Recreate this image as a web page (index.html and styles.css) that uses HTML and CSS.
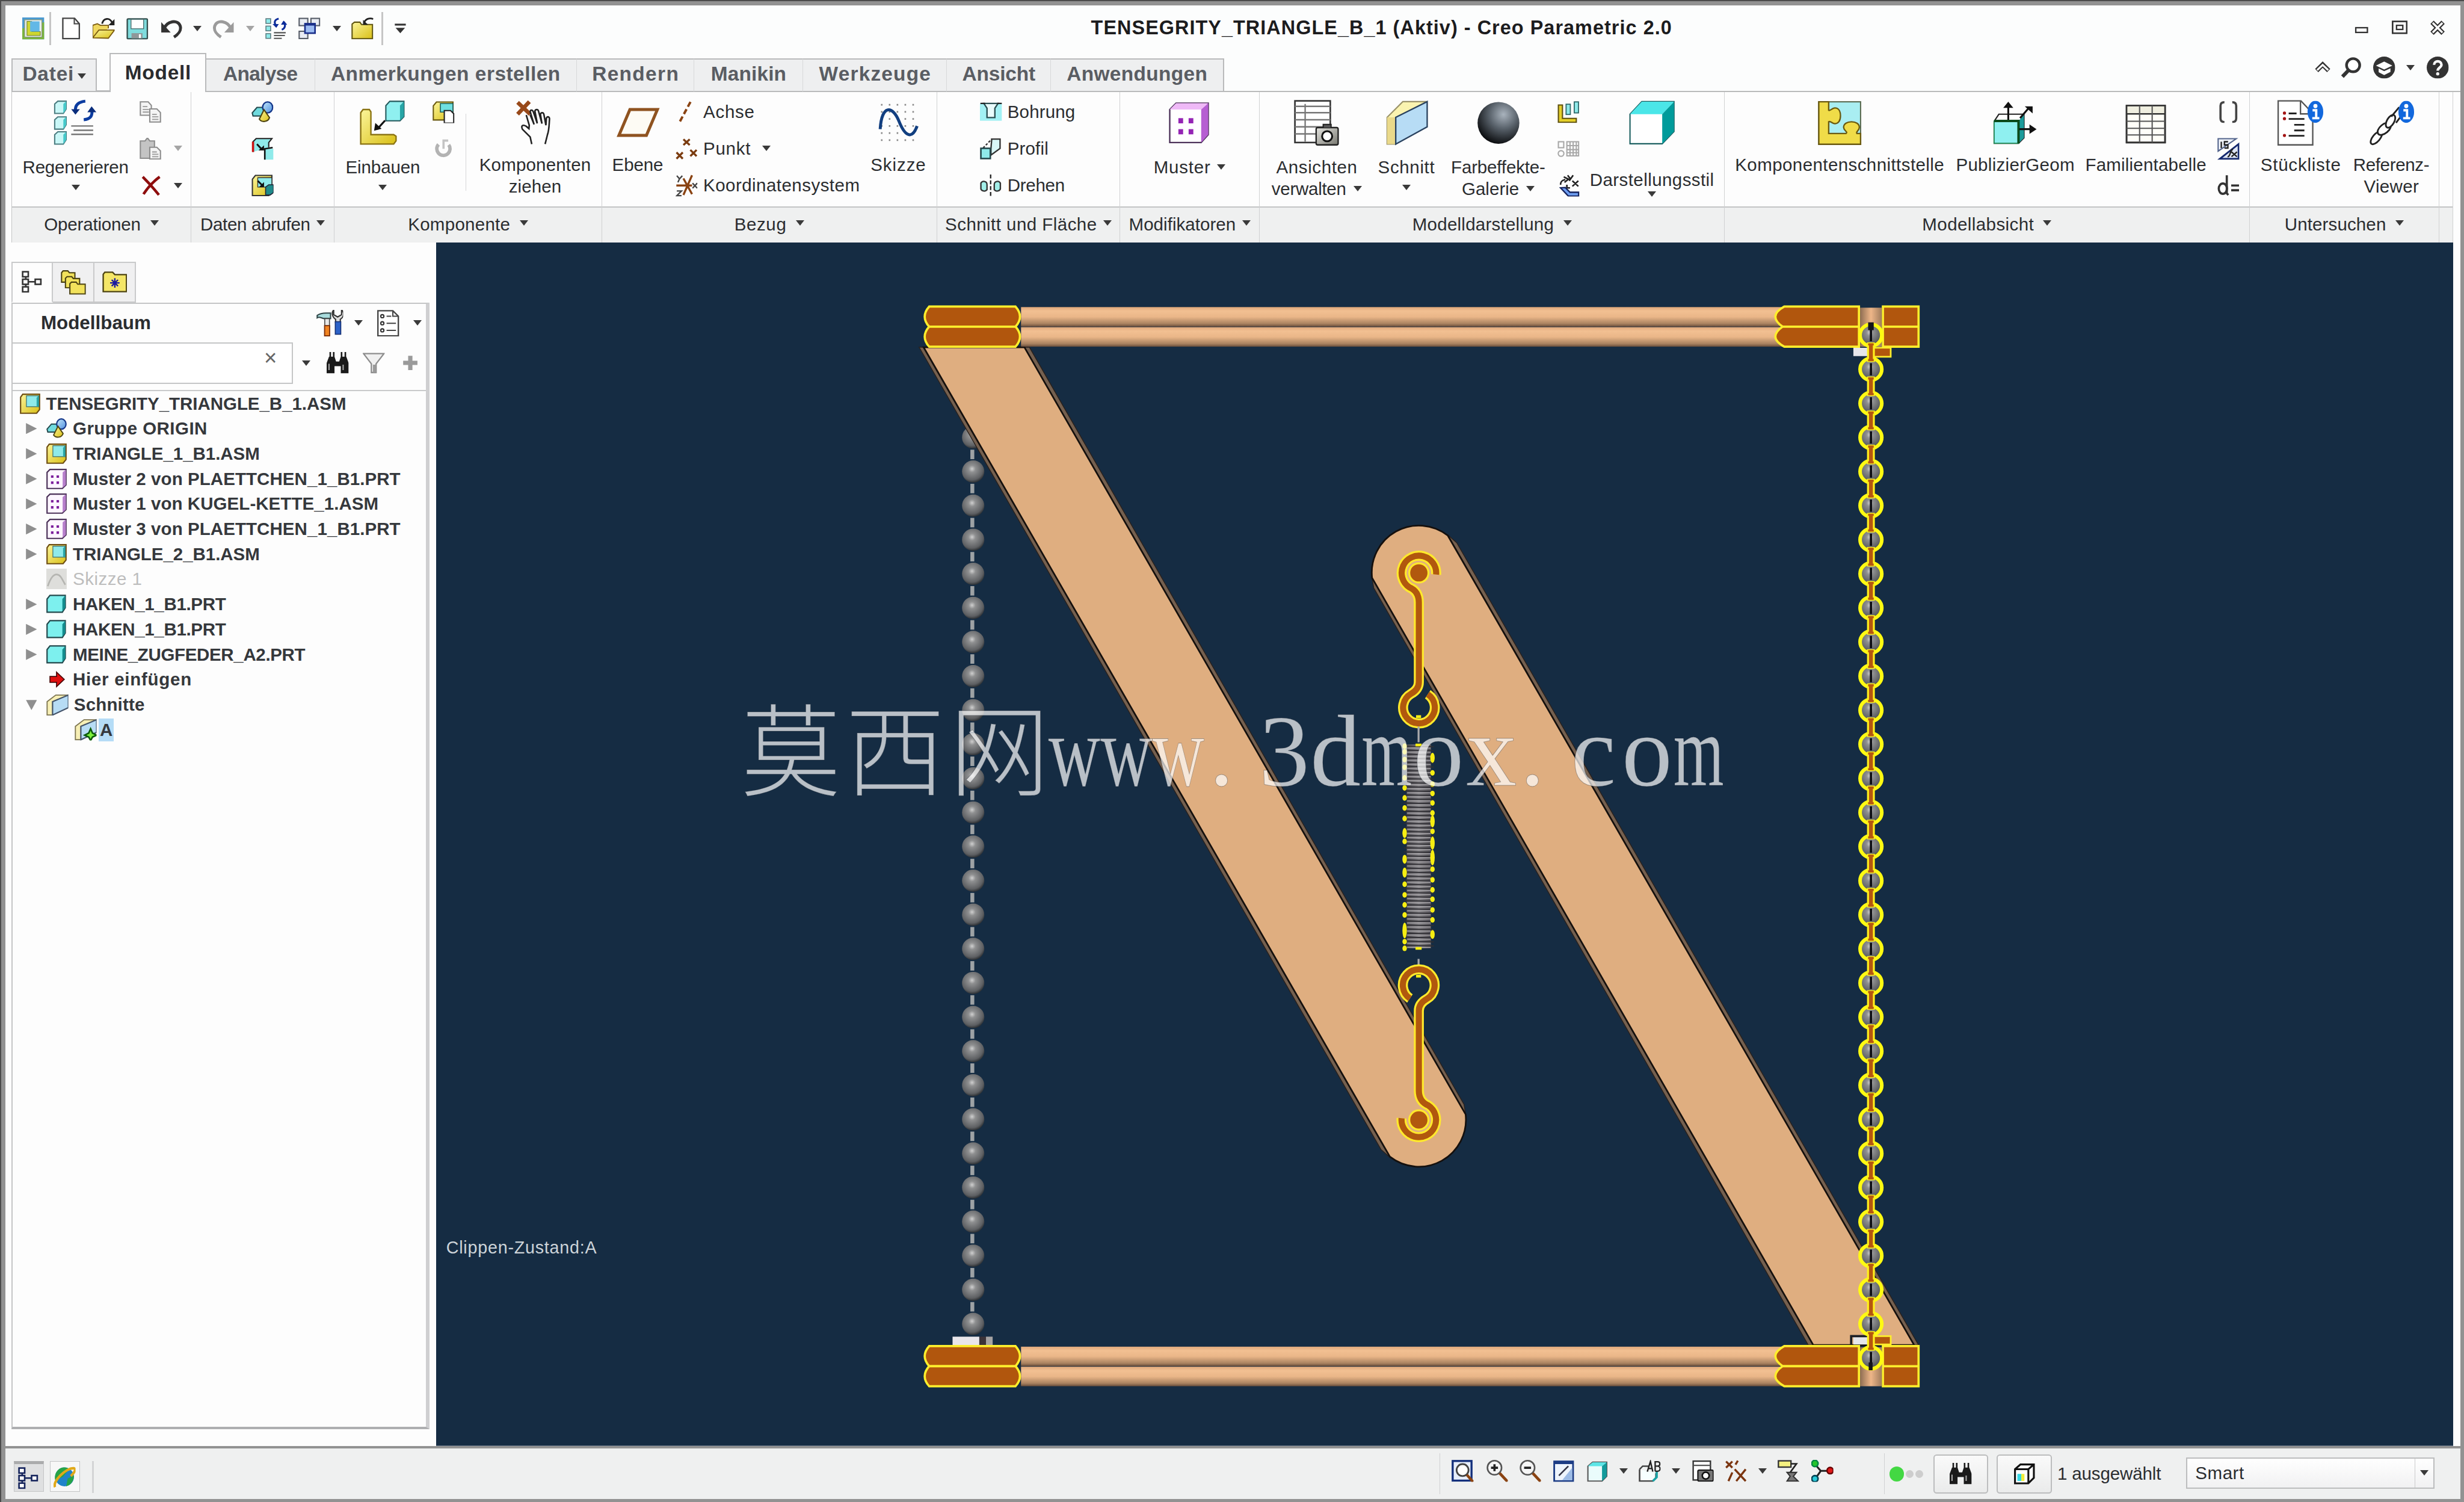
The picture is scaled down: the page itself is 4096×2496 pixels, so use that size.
FILE: index.html
```html
<!DOCTYPE html>
<html lang="de">
<head>
  <meta charset="UTF-8" />
  <title>TENSEGRITY_TRIANGLE_B_1 (Aktiv) - Creo Parametric 2.0</title>
  <link rel="stylesheet" href="styles.css">
</head>
<body>

  <!-- Icon sprite -->
  <svg class="sprite" aria-hidden="true">
    <defs>
      <linearGradient id="gYellow" x1="0" y1="0" x2="1" y2="1"><stop offset="0" stop-color="#fbf59a"/><stop offset="1" stop-color="#d9bf16"/></linearGradient>
      <linearGradient id="gBlue" x1="0" y1="0" x2="1" y2="1"><stop offset="0" stop-color="#c4e9fb"/><stop offset="1" stop-color="#4f8fe0"/></linearGradient>
      <linearGradient id="gGrey" x1="0" y1="0" x2="1" y2="1"><stop offset="0" stop-color="#e6e6e2"/><stop offset="1" stop-color="#77776f"/></linearGradient>
      <radialGradient id="gSphere" cx=".62" cy=".3" r=".75"><stop offset="0" stop-color="#a9b3bd"/><stop offset=".45" stop-color="#59626b"/><stop offset="1" stop-color="#050608"/></radialGradient>
    </defs>

    <symbol id="i-creo" viewBox="0 0 14 14">
      <rect width="14" height="14" fill="#4b9ad0"/><path d="M0 14V7L14 3v11z" fill="#79b33b"/>
      <rect x="1.500" y="1.500" width="11" height="11" fill="#e9eff0" stroke="#8b9a7a" stroke-width=".5"/>
      <path d="M3 2.500v9h8.500V9H6V2.500z" fill="#cfd630" stroke="#6b7a1c" stroke-width=".4"/><rect x="5" y="2.500" width="6" height="6.500" fill="#63b8e6"/>
    </symbol>
    <symbol id="i-new" viewBox="0 0 14 14"><path d="M1.700.5h7.500l3 3.500v9.500H1.700z" fill="#fff" stroke="#444" stroke-width=".9"/><path d="M9 .5V4h3.200" fill="none" stroke="#444" stroke-width=".8"/></symbol>
    <symbol id="i-open" viewBox="0 0 14 14"><path d="M0 13V5l3-1 2 1h5v2" fill="#efd75f" stroke="#7a5a10" stroke-width=".7"/><path d="M0 13l4-5h10l-4 5.200z" fill="url(#gYellow)" stroke="#7a5a10" stroke-width=".7"/><path d="M6 4c1-4 5-4 6.500-.5" fill="none" stroke="#222" stroke-width="1.100"/><path d="M14 1v4h-4z" fill="#222"/></symbol>
    <symbol id="i-save" viewBox="0 0 14 14"><rect x=".6" y=".9" width="12.800" height="12.700" rx=".6" fill="#7fdcdd" stroke="#35504f" stroke-width=".9"/><rect x="3" y="1.200" width="8" height="6" fill="#fff" stroke="#46696a" stroke-width=".5"/><rect x="3.300" y="10" width="7" height="3.300" fill="#8f9799"/><rect x="8" y="10.700" width="1.300" height="2.400" fill="#fff"/></symbol>
    <symbol id="i-undo" viewBox="0 0 14 14"><path d="M2 7.500C4 2 11 1 12.500 5.500c.8 3-1 5-4 7" fill="none" stroke="currentColor" stroke-width="1.900"/><path d="M.4 3v6.600h6z" fill="currentColor"/></symbol>
    <symbol id="i-regen" viewBox="0 0 14 14"><g fill="#8feaea" stroke="#5a7c80" stroke-width=".6"><rect x=".4" y=".8" width="3" height="3"/><rect x=".4" y="5.500" width="3" height="3"/><rect x=".4" y="10.300" width="3" height="3"/></g><path d="M5.500 9.700h7.500M5.500 11.500h7M5.500 13.300h5" stroke="#555" stroke-width=".8"/><path d="M8.500.8C5.800 1.500 5.600 3 6.500 4.800M10.500 7.800c2.500-1 2.500-3.600 1.200-5" fill="none" stroke="#0c2c9a" stroke-width="1.200"/><path d="M4.600 4.200h4L7 6.600zM10 4.600h4L11.600 2z" fill="#0c2c9a"/></symbol>
    <symbol id="i-windows" viewBox="0 0 14 14"><g fill="#e8ecf3" stroke="#555b66" stroke-width=".8"><rect x=".5" y=".6" width="5.500" height="4.600"/><rect x="8" y=".6" width="5.500" height="4.600"/><rect x=".5" y="8.800" width="5.500" height="4.600"/></g><rect x="4.200" y="4" width="6.400" height="6" fill="#9dbcf2" stroke="#1a2f8a"/><path d="M4 4.400h6.800" stroke="#1a2f8a" stroke-width="1.600"/></symbol>
    <symbol id="i-closefolder" viewBox="0 0 14 14"><path d="M.5 13.500V4.200L2 3h3.500l1 1.500h7v9z" fill="url(#gYellow)" stroke="#5e5410" stroke-width=".8"/><path d="M8 3.500C9 1 11.500 0 14 1" fill="none" stroke="#222" stroke-width="1.100"/><path d="M7.500 1.500v3.200h3.200z" fill="#222"/></symbol>
    <symbol id="i-customize" viewBox="0 0 8 8"><path d="M.5 1.500h7" stroke="#333" stroke-width="1.200"/><path d="M1 3.500h6L4 7z" fill="#333"/></symbol>

    <symbol id="i-min" viewBox="0 0 10 10"><rect x=".8" y="5" width="7.400" height="3" fill="#fff" stroke="#333" stroke-width=".9"/></symbol>
    <symbol id="i-max" viewBox="0 0 10 10"><rect x=".5" y="1" width="9" height="7.500" fill="#fff" stroke="#333" stroke-width="1"/><rect x="3" y="3.500" width="4" height="2.600" fill="#fff" stroke="#333" stroke-width=".9"/></symbol>
    <symbol id="i-close" viewBox="0 0 10 10"><path d="M1.500 1.500l7 7M8.500 1.500l-7 7" stroke="#333" stroke-width="3"/><path d="M1.900 1.900l6.200 6.200M8.100 1.900L1.900 8.100" stroke="#fff" stroke-width="1.300"/></symbol>
    <symbol id="i-collapse" viewBox="0 0 10 8"><path d="M1.200 6L5 2.200 8.800 6" fill="none" stroke="#333" stroke-width="2.900"/><path d="M1.500 5.700L5 2.400l3.500 3.300" fill="none" stroke="#fff" stroke-width="1.200"/></symbol>
    <symbol id="i-search" viewBox="0 0 14 14"><circle cx="8.300" cy="5.500" r="4.200" fill="#fff" stroke="#333" stroke-width="1.700"/><path d="M5.300 8.800L1.500 12.800" stroke="#333" stroke-width="2.300"/></symbol>
    <symbol id="i-learn" viewBox="0 0 14 14"><circle cx="7" cy="7" r="7" fill="#333"/><path d="M1.800 5.700L7 3.200l5.200 2.500L7 8.200z" fill="#fff"/><path d="M3.500 7.600L7 9.300l4-1.800v2.300L7 11.800 3.500 10z" fill="#fff"/></symbol>
    <symbol id="i-help" viewBox="0 0 14 14"><circle cx="7" cy="7" r="7" fill="#333"/><path d="M4.700 5.300C4.700 2.300 9.400 2.300 9.400 5.200 9.400 7 7 7 7 9" fill="none" stroke="#fff" stroke-width="1.600"/><circle cx="7" cy="11" r="1" fill="#fff"/></symbol>

    <symbol id="i-copy" viewBox="0 0 14 14"><g fill="#f4f4f4" stroke="#8d8d8d" stroke-width=".8"><path d="M.5.5h5l2 2.200V9h-7z"/><path d="M6.500 5h4.500l2.300 2.300v6H6.500z"/></g><path d="M2 3.500h3M2 5.300h4M2 7h4M8 8.500h3M8 10h4M8 11.600h4" stroke="#999" stroke-width=".7"/></symbol>
    <symbol id="i-paste" viewBox="0 0 14 14"><path d="M.5 2h3l1.500-2 1.500 2h3v11h-9z" fill="#c4c4c4" stroke="#8d8d8d" stroke-width=".8"/><path d="M6.500 6h4.500l2.300 2.300v5.200H6.500z" fill="#f4f4f4" stroke="#8d8d8d" stroke-width=".8"/><path d="M8 9h3M8 10.500h4M8 12h4" stroke="#999" stroke-width=".7"/></symbol>
    <symbol id="i-delete" viewBox="0 0 14 14"><path d="M2 1.500c3 3 6 6 10.300 11.500M12.800 1.500C8 5 5 8.500 2.500 12.500" fill="none" stroke="#8e0d0d" stroke-width="1.700"/></symbol>

    <symbol id="i-udf" viewBox="0 0 14 14"><path d="M.5 7.500l3-3.500h5l-1.500 5.500H1z" fill="#6fdadd" stroke="#24484c" stroke-width=".8"/><ellipse cx="10.300" cy="4" rx="3.200" ry="3.500" fill="url(#gBlue)" stroke="#16388a" stroke-width=".9"/><path d="M8 5.500l3.500 5c-1 3-5 3.200-6.500 1z" fill="url(#gYellow)" stroke="#4e4410" stroke-width=".8"/></symbol>
    <symbol id="i-copygeom" viewBox="0 0 14 14"><path d="M1 9V2.500L3 .5h10L11 3v3" fill="#8feaea" stroke="#222" stroke-width=".8"/><path d="M1 2.500V9" stroke="#c11" stroke-width="1.400"/><path d="M8 7h6v7H8z" fill="#8feaea"/><path d="M13.500 6.200L8.500 7v7" fill="none" stroke="#111" stroke-width="1"/><path d="M3.500 4l3 3.300" stroke="#111" stroke-width="1.100"/><path d="M8 8H4.500L8 4.800z" fill="#111"/></symbol>
    <symbol id="i-shrink" viewBox="0 0 14 14"><path d="M.6 13.400V3L2.500.6H13V12l-2 1.400z" fill="url(#gYellow)" stroke="#333" stroke-width=".8"/><path d="M4 2h9v6H4z" fill="#8feaea" stroke="#333" stroke-width=".5"/><path d="M9 8l2-1.500h3v5L12 13H9z" fill="#1f8a8a" stroke="#223" stroke-width=".6"/><path d="M4 4l3 3" stroke="#111" stroke-width="1.100"/><path d="M8 8H4.800L8 4.800z" fill="#111"/></symbol>
    <symbol id="i-create" viewBox="0 0 14 14"><path d="M.5 12V3L2.500.6H13V9L11 12z" fill="url(#gYellow)" stroke="#6b5a10" stroke-width=".8"/><path d="M5 1.500h8V7H5z" fill="#6fe0e0" stroke="#1b5c5c" stroke-width=".6"/><path d="M7.500 6h4l2 2v6h-6z" fill="#fff" stroke="#222" stroke-width=".8"/></symbol>
    <symbol id="i-repeat" viewBox="0 0 14 14"><path d="M10.300 4.500a4.200 4.200 0 1 1-6.500-.3" fill="none" stroke="#b3b3b3" stroke-width="2.200"/><path d="M7 7V1.800h3" fill="none" stroke="#c4c4c4" stroke-width="1.400"/></symbol>
    <symbol id="i-axis" viewBox="0 0 14 14"><path d="M9.500.5L2.500 13.500" stroke="#8a4312" stroke-width="1.500" stroke-dasharray="3.500 1.800"/></symbol>
    <symbol id="i-point" viewBox="0 0 14 14"><path d="M5 1l4 3.600M9 1L5 4.600M.6 9.300l4 4M4.600 9.300l-4 4M9.400 7.700l4 4M13.400 7.700l-4 4" stroke="#7b3c10" stroke-width="1.300"/></symbol>
    <symbol id="i-csys" viewBox="0 0 14 14"><path d="M.5 7h10M10.500.5L5 13M5 2.500l5.500 10" stroke="#8a4312" stroke-width="1.300"/><path d="M.8.800l1.700 2L4.300.8M2.500 2.800L1.500 5M10.800 5.500l3 3.200M13.800 5.500l-3 3.200M.8 10.500h3l-3 3h3" fill="none" stroke="#444" stroke-width=".9"/></symbol>
    <symbol id="i-hole" viewBox="0 0 14 14"><rect y="1.500" width="14" height="11" fill="#a2f1f4"/><path d="M2.500 1.500h9l-2 3v6h-5v-6z" fill="#e9fbfb" stroke="#2b4f52" stroke-width=".9"/><path d="M.3 1.500h3M11 1.500h3" stroke="#222" stroke-width=".9"/></symbol>
    <symbol id="i-extrude" viewBox="0 0 14 14"><path d="M7.500.8h5.300v6L7 11V7z" fill="#d9f7f7" stroke="#333" stroke-width=".9"/><path d="M2 6.500L7.500.8" stroke="#333" stroke-dasharray="1.500 1" stroke-width=".9"/><rect x=".6" y="6.700" width="6" height="6.500" fill="#8feaea" stroke="#24484c" stroke-width="1"/></symbol>
    <symbol id="i-revolve" viewBox="0 0 14 14"><path d="M6.800 0v14" stroke="#222" stroke-dasharray="2.500 1.200" stroke-width=".9"/><path d="M.6 5.500C1.500 3.800 4.500 4 4.500 6.500v3.200C3 11.500.6 10 .6 9z" fill="#a2efe9" stroke="#333" stroke-width=".9"/><path d="M13 5.500c-.9-1.700-3.900-1.500-3.900 1v3.200c1.500 1.800 3.900.3 3.900-.7z" fill="#a2efe9" stroke="#333" stroke-width=".9"/></symbol>
    <symbol id="i-explode" viewBox="0 0 14 14"><path d="M.6 2.500h2.600V11H12v2.500H.6z" fill="#e4cf2a" stroke="#5e5010" stroke-width=".8"/><rect x="5.500" y="2" width="2.700" height="6.500" fill="#8feaea" stroke="#2f6a6c" stroke-width=".7"/><rect x="10.700" y=".5" width="2.700" height="7" fill="#8feaea" stroke="#2f6a6c" stroke-width=".7"/></symbol>
    <symbol id="i-toggle" viewBox="0 0 14 14"><g fill="none" stroke="#a8a8a8" stroke-width=".8"><rect x=".6" y="2.500" width="3.400" height="3.800"/><circle cx="2.300" cy="10" r="1.800"/><path d="M6 2.500h7.500v9H6zM8 2.500v9M10 2.500v9M12 2.500v9M6 5h7.500M6 7.500h7.500M6 9.500h7.500"/></g></symbol>
    <symbol id="i-drag3d" viewBox="0 0 14 14"><path d="M2 6.500C2 3.500 4 3.500 5 3.200M4 1.500l3 1.500-2.500 2M6.500.5L8 2.500M10 .5L7.500 4M9.500 4l3.800 3.500M13.300 4L9.500 7.500M6 6.500v2h2" fill="none" stroke="#222" stroke-width="1"/><path d="M2 8.500l3-.2 3 3h5.500v2.500H7z" fill="#6d9df0" stroke="#14225c" stroke-width=".9"/></symbol>
    <symbol id="i-brackets" viewBox="0 0 14 14"><path d="M4.500.7Q2 .7 2 3v8q0 2.300 2.500 2.300M9.500.7Q12 .7 12 3v8q0 2.300-2.500 2.300" fill="none" stroke="#444" stroke-width="1.400"/></symbol>
    <symbol id="i-switch" viewBox="0 0 14 14"><path d="M.5 8.500V.6H12z" fill="#f1f4fa" stroke="#53648c" stroke-width=".8"/><path d="M1.500 13.400h12V4z" fill="#dfe6f6" stroke="#14286e" stroke-width="1.100"/><path d="M2.500 2.500v4M4.500 6.500h2.200V4.500H4.500v-2h2.300M6.500 12c2 .3 1.500-5 3.500-4.500M9 9l3.500 3M12.500 9L9 12" fill="none" stroke="#222" stroke-width=".9"/></symbol>
    <symbol id="i-dim" viewBox="0 0 14 14"><ellipse cx="3.500" cy="9" rx="2.600" ry="3.300" fill="none" stroke="#333" stroke-width="1.400"/><path d="M6 .5V12l1 1M8.800 7h5M8.800 10h5" fill="none" stroke="#333" stroke-width="1.400"/></symbol>

    <symbol id="b-regen" viewBox="0 0 30 30"><g fill="#c9f7f7" stroke="#4b7c80" stroke-width=".8"><path d="M1.500 3l2-1.800h5.300v5L7 9H1.500zM1.500 13l2-1.800h5.300v5L7 19H1.500zM1.500 22.500l2-1.800h5.300v5l-1.800 2.800H1.500z"/></g><g fill="#46c9ca"><path d="M7 3l1.800-1.800v5L7 9zM7 13l1.800-1.800v5L7 19zM7 22.500l1.800-1.800v5L7 28.500z"/></g><path d="M12 17h14M13.500 19.700H26M12 22.300h14" stroke="#777" stroke-width=".9"/><path d="M21 1.200c-5 .5-6.500 3-6.300 6M20 13c5-.5 5.500-3 5.200-6.500" fill="none" stroke="#0c3ca0" stroke-width="1.900"/><path d="M12 6.300h5.500l-2.800 3.500zM22.300 8.200H28L25 4.500z" fill="#0a2d7c"/></symbol>
    <symbol id="b-assemble" viewBox="0 0 30 30"><path d="M1 28.500V8.500L2.500 6.500H6.500l1 1.500v14.500H22l1.500 1v3L22 28.500z" fill="url(#gYellow)" stroke="#8a7312" stroke-width=".9"/><path d="M17 4l2.500-2.700H28.500V11l-2.500 2.700H17z" fill="#8ff0f0" stroke="#25595c" stroke-width=".8"/><path d="M26 13.500V4l2.500-2.700V11z" fill="#27a5a6"/><path d="M16.500 13.500L11.500 19" stroke="#111" stroke-width="1.200"/><path d="M9.500 20l.8-5 4 3.800z" fill="#111"/></symbol>
    <symbol id="b-drag" viewBox="0 0 30 30"><path d="M4 2l8 7.500M11.500 1.500L4 9.500" stroke="#98491a" stroke-width="2.500"/><path d="M13 28.500L12 24l-5-5c-1-2.500.5-3 2.500-1.800l1.700 1.500.2-2.200L9.500 10M12 10l2.500 6-2.500-8c0-1.500 1.500-1.500 2 0l2.500 7.300L15 7.500c.3-1.300 2-1.300 2.300 0l2.200 8-1-6c.5-1.300 1.800-1.300 2.200 0l1.300 7 .3-4.500c.7-1.500 2-.8 2 .5-.3 4-.2 7-1.300 10l-1.500 6" fill="none" stroke="#222" stroke-width="1"/></symbol>
    <symbol id="b-plane" viewBox="0 0 30 30"><path d="M10 6.500h17.500l-7 16.500H3z" fill="#fdfbf4" stroke="#8f5320" stroke-width="1.900"/></symbol>
    <symbol id="b-sketch" viewBox="0 0 30 30"><path d="M4 3.500h24M4 8h24M4 12.500h24M4 17h24M4 21.500h24M4 26h24" stroke="#8a8a8a" stroke-width="1" stroke-dasharray="1 4"/><path d="M3.500 19C4.500 3 11.500 4 15.500 14s8.500 11.500 11.500 3" fill="none" stroke="#123f80" stroke-width="1.900"/></symbol>
    <symbol id="b-pattern" viewBox="0 0 30 30"><path d="M2.500 6.500l4-4H27v20l-4.500 5H2.500z" fill="#fff" stroke="#4b3158" stroke-width=".9"/><path d="M2.500 6.500l4-4H27l-4.500 4z" fill="#efb9f7"/><path d="M22.500 27.500v-21L27 2.500v20z" fill="#b65fd2"/><g fill="#9424b4"><rect x="8" y="12" width="3" height="3.300"/><rect x="14.500" y="12" width="3" height="3.300"/><rect x="8" y="19" width="3" height="3.300"/><rect x="14.500" y="19" width="3" height="3.300"/></g></symbol>
    <symbol id="b-views" viewBox="0 0 30 30"><rect x="1" y="1" width="22.500" height="26.500" fill="#fff" stroke="#333"/><path d="M1 4.500h22.500M1 8.500h22.500M1 13h22.500M1 17.500h22.500M1 22h22.500M7.500 3v24" stroke="#777" stroke-width=".9"/><rect x="14.500" y="18" width="14" height="11" rx="1" fill="url(#gGrey)" stroke="#222" stroke-width=".9"/><path d="M19 18v-2h5v2" fill="#555" stroke="#222" stroke-width=".8"/><circle cx="21.500" cy="23.500" r="3.200" fill="#fff" stroke="#111" stroke-width="1.200"/></symbol>
    <symbol id="b-section" viewBox="0 0 30 30"><path d="M3 11.500L13 1.500h15.500L8.500 11.500 8.500 28.500H3z" fill="#faf3b0" stroke="#9b936a" stroke-width=".8"/><path d="M3 11.500h5.500v17H3z" fill="#ead98a"/><path d="M8.500 11.500l20-10v16l-20 11z" fill="#b7dcf5" stroke="#2b4360" stroke-width=".9"/></symbol>
    <symbol id="b-sphere" viewBox="0 0 30 30"><circle cx="15.300" cy="15" r="13.300" fill="url(#gSphere)"/></symbol>
    <symbol id="b-shade" viewBox="0 0 30 30"><path d="M1 9.500l7.500-8h20.500v19l-7.500 7.800H1z" fill="#fff" stroke="#1b5f60" stroke-width=".8"/><path d="M1 9.500l7.500-8h20.500l-7.500 8z" fill="#4be6e8"/><path d="M21.500 28.300V9.500l7.500-8v19z" fill="#009b9b"/></symbol>
    <symbol id="b-puzzle" viewBox="0 0 30 30"><rect x="1.700" y="1.600" width="26.600" height="27" fill="#a9eef2" stroke="#5a6a50" stroke-width=".8"/><path d="M1.700 1.600H8V7c1.200.6 2-1.500 4-1.500 2.200 0 3.500 2 3.500 5s-1.300 5-3.500 5c-2 0-2.800-2-4-1.200v7.500h11c1.500-1.200-1.500-1.800-1.500-4 0-2.300 2.300-3.500 5-3.500s5 1.200 5 3.500c0 2.200-2.500 2.800-1.500 4h2.300v6.800H1.700z" fill="#f0dc48" stroke="#6b5a10" stroke-width=".9"/></symbol>
    <symbol id="b-publish" viewBox="0 0 30 30"><path d="M1.500 14l3-4.500h16v15l-3.500 3.500H1.500z" fill="#fff" stroke="#222" stroke-width=".8"/><path d="M17 14l3.500-4.500v15L17 28z" fill="#1b9b9b"/><rect x="1.500" y="14" width="15.500" height="14" fill="#8ff0f0" stroke="#285" stroke-width=".7"/><path d="M1.500 13.800h15.500V28" fill="none" stroke="#0b4a1a" stroke-width="1.500"/><path d="M10.500 13V4M18 12l6-7M17.500 19h7" stroke="#111" stroke-width="1.200"/><path d="M7.300 5.500h6.400L10.500 1.500zM21 4.500h5V9zM24 16v6l4.500-3z" fill="#111"/></symbol>
    <symbol id="b-table" viewBox="0 0 30 30"><rect x="2.700" y="4" width="24.500" height="23.500" fill="#fffef8" stroke="#333"/><rect x="2.700" y="4" width="24.500" height="5.300" fill="#f0efe0"/><path d="M2.700 4h24.500v23.500H2.700zM2.700 9.300h24.500" fill="none" stroke="#333"/><path d="M2.700 14h24.500M2.700 18.500h24.500M2.700 22.700h24.500M11 4v23.500M19 4v23.500" stroke="#555" stroke-width=".8"/></symbol>
    <symbol id="b-bom" viewBox="0 0 30 30"><path d="M.8 1h14.500l7.500 8v20H.8z" fill="#fff" stroke="#555" stroke-width=".9"/><path d="M15 1v8.300h7" fill="none" stroke="#555" stroke-width=".9"/><path d="M7.500 9h5M7.500 12.500h10M11 16.200h6.500M11 19.800h6.500M7.500 23.200h10" stroke="#222" stroke-width="1.100"/><g fill="#a31515"><circle cx="4.800" cy="8.800" r="1"/><circle cx="4.800" cy="12.300" r="1"/><circle cx="4.800" cy="23" r="1"/></g><use href="#badge-info" x="19.500" y="1"/></symbol>
    <symbol id="b-ref" viewBox="0 0 30 30"><g fill="#fff" stroke="#222" stroke-width="1.100"><ellipse cx="5.500" cy="24.500" rx="2.300" ry="5" transform="rotate(40 5.500 24.500)"/><ellipse cx="10.500" cy="18.800" rx="2.800" ry="5" transform="rotate(50 10.500 18.800)"/><ellipse cx="14.500" cy="14" rx="2.300" ry="4.500" transform="rotate(30 14.500 14)"/><path d="M15 11l5-6M18 15l3-4"/></g><use href="#badge-info" x="19.500" y="1"/></symbol>
    <symbol id="badge-info" viewBox="0 0 10 14" width="10" height="14"><ellipse cx="5" cy="7" rx="5" ry="7" fill="#1268dd"/><circle cx="5" cy="3.300" r="1.300" fill="#fff"/><path d="M3.200 6H5.500v5M3 11h4.500" fill="none" stroke="#fff" stroke-width="1.500"/></symbol>

    <symbol id="i-tree" viewBox="0 0 14 14"><g fill="#fff" stroke="currentColor" stroke-width="1"><path d="M3 3v8M5 7h4" /><rect x="1" y=".6" width="3.600" height="3.200"/><rect x="1" y="5.400" width="3.600" height="3.200"/><rect x="1" y="10.200" width="3.600" height="3.200"/><rect x="9" y="5.400" width="3.600" height="3.200"/></g></symbol>
    <symbol id="i-folders" viewBox="0 0 16 16"><g fill="#f2e25c" stroke="#4c4312" stroke-width=".8"><path d="M.5 8V2L1.500.8h3L5.500 2H9v6z"/><path d="M3 11.500v-6l1-1h3l1 1.200h4v6z"/><path d="M5.800 15.500V9l1-1h3l1 1.300h4.800v6.200z"/></g></symbol>
    <symbol id="i-favfolder" viewBox="0 0 16 16"><path d="M.6 14V3l1-1.300h5L8 3.200h7.400V14z" fill="#f4e667" stroke="#4c4312" stroke-width=".9"/><path d="M8 5.500v6M5 8.500h6M6 6.500l4 4M10 6.500l-4 4" stroke="#1a1aa0" stroke-width=".9"/></symbol>
    <symbol id="i-tools" viewBox="0 0 17 17"><path d="M.5 5V3.500C2 2.500 4 2 6 2h3v3.500H5C3.500 5.500 2 4 .5 5z" fill="#a8dbdc" stroke="#2f4446" stroke-width=".8"/><path d="M5.300 5.500h3V11h-3z" fill="#e8e8e8" stroke="#444" stroke-width=".6"/><rect x="5.200" y="10" width="3.200" height="6.500" fill="#f08422" stroke="#7c2f08" stroke-width=".7"/><path d="M11 0v3l2.500 1.500L16 3V0c2 1.500 1.500 4.500-.8 6V8h-3V6C10 4.500 9.500 1.500 11 0z" fill="#ddd" stroke="#333" stroke-width=".8"/><rect x="12" y="7.500" width="3.500" height="8" fill="#2d63c8" stroke="#142f73" stroke-width=".6"/></symbol>
    <symbol id="i-list" viewBox="0 0 14 17"><path d="M.5.5H10L13.500 4v12.500H.5z" fill="#fff" stroke="#444" stroke-width=".9"/><path d="M10 .5V4h3.500M6 4h3M6 8.500h6M6 13h6" stroke="#444" stroke-width=".8" fill="none"/><g fill="none" stroke="#333" stroke-width=".8"><circle cx="3.300" cy="4" r="1"/><circle cx="3.300" cy="8.500" r="1"/><circle cx="3.300" cy="13" r="1"/></g></symbol>
    <symbol id="i-find" viewBox="0 0 14 14"><path d="M1.800 0h1v3h-1zM4 0h1v3H4zM9 0h1v3H9zM11.400 0h1v3h-1zM0 12.500V7l1.500-4H5l1 3h2l1-3h3.500L14 7v6.500H9V9H5v4.500H0z" fill="#1a1a1a"/><path d="M1.500 7.500v4M10.500 8v3.500" stroke="#aaa" stroke-width=".8"/></symbol>
    <symbol id="i-funnel" viewBox="0 0 14 14"><path d="M.5 1h13L8.500 7.500V13h-3V7.500z" fill="#f0f0f0" stroke="#8d8d8d" stroke-width=".9"/><path d="M6.500 8h2v5h-2z" fill="#999"/></symbol>
    <symbol id="i-plus" viewBox="0 0 11 11"><path d="M4 .5h3V4h3.500v3H7v3.500H4V7H.5V4H4z" fill="#9a9a9a"/></symbol>

    <symbol id="t-asm" viewBox="0 0 14 14"><path d="M.5 13.500v-11L2 .5h11.500V11l-2 2.500z" fill="url(#gYellow)" stroke="#6e4e12" stroke-width=".9"/><path d="M4.500 1.500h8.500v7.500H4.500z" fill="#8feaea" stroke="#3d6d6d" stroke-width=".5"/><path d="M11.500 9V3L13 1v8z" fill="#2aa6a8"/></symbol>
    <symbol id="t-pat" viewBox="0 0 14 14"><path d="M.5 13.500V2.500L2.500.5h11V11l-2.500 2.500z" fill="#fdf6ff" stroke="#4b3158" stroke-width=".9"/><path d="M11.200 13V2.500L13.400.6V11z" fill="#b77fcc"/><path d="M3.200 4.500h1.700v1.700H3.200zM7 4.500h1.700v1.700H7zM3.200 8.700h1.700v1.700H3.200zM7 8.700h1.700v1.700H7z" fill="#7c1f9c"/></symbol>
    <symbol id="t-prt" viewBox="0 0 14 14"><path d="M.5 12.500V3.500L2.500 1h10.500v8.500l-2 3z" fill="#7df0ee" stroke="#24484c" stroke-width=".9"/><path d="M11 12V3.500L13 1v8.500z" fill="#138d8f"/></symbol>
    <symbol id="t-sketch" viewBox="0 0 14 14"><rect width="14" height="14" fill="#dededb"/><path d="M1 12c1-3 3-8 6-8s4 4 6 7" fill="none" stroke="#b5b5b1" stroke-width="1.100"/></symbol>
    <symbol id="t-insert" viewBox="0 0 14 14"><path d="M2.500 5H7V2l5.300 5L7 12V9H2.500z" fill="#e01010" stroke="#4a0808" stroke-width=".7"/></symbol>
    <symbol id="t-sec" viewBox="0 0 14 14"><path d="M.5 5L6 .8h8L4 5v8.500H.5z" fill="#f7efb5" stroke="#7d7550" stroke-width=".7"/><path d="M4 5l10-4.200v8L4 13.500z" fill="#b7dcf5" stroke="#44546a" stroke-width=".8"/></symbol>
    <symbol id="t-seca" viewBox="0 0 14 14"><use href="#t-sec"/><path d="M10.200 6.500l1.200 2.800 2.600 1.300-2.600 1.200-1.200 2.200-1.200-2.200-2.600-1.200 2.600-1.300z" fill="#7df23c" stroke="#0b5a0b" stroke-width="1"/></symbol>

    <symbol id="s-globe" viewBox="0 0 14 14"><circle cx="7" cy="7" r="6" fill="#1f83c9"/><path d="M3 2.500C5 0 9 1 10 2L6 7 1 9C.5 6 1.500 4 3 2.500zM9 8l4-2c0 3-1.500 6-5 7z" fill="#26a348"/><path d="M1 13.500C-1 10 8 1 13 1.500c2 1-1 4-2 5" fill="none" stroke="#e0a91a" stroke-width="1.600"/></symbol>
    <symbol id="s-refit" viewBox="0 0 14 14"><rect x=".7" y=".7" width="12" height="12.500" fill="#e7eefb" stroke="#14307c" stroke-width="1.300"/><circle cx="7" cy="6.500" r="3.800" fill="#fff" stroke="#444" stroke-width="1.100"/><path d="M9.700 9.500l4 4.500" stroke="#8a4312" stroke-width="1.700"/></symbol>
    <symbol id="s-zin" viewBox="0 0 14 14"><circle cx="5.500" cy="5" r="4.500" fill="#f5f5f5" stroke="#555"/><path d="M3.300 5h4.400M5.500 2.800v4.400" stroke="#222" stroke-width="1.400"/><path d="M8.800 8.500l5 5.300" stroke="#8a4312" stroke-width="1.800"/></symbol>
    <symbol id="s-zout" viewBox="0 0 14 14"><circle cx="5.500" cy="5" r="4.500" fill="#f5f5f5" stroke="#555"/><path d="M3.300 5h4.400" stroke="#222" stroke-width="1.400"/><path d="M8.800 8.500l5 5.300" stroke="#8a4312" stroke-width="1.800"/></symbol>
    <symbol id="s-paint" viewBox="0 0 14 14"><rect x="1" y="1" width="12" height="12.500" fill="#eef4fd" stroke="#1c3c85" stroke-width="1.100"/><path d="M1 1.800h12" stroke="#1c3c85" stroke-width="1.700"/><path d="M12.500 5v8H6z" fill="#9dbbe6"/><path d="M4 10l6-6" stroke="#334" stroke-width="1"/></symbol>
    <symbol id="s-cube" viewBox="0 0 14 14"><path d="M1 4l3-2.500h9v9L10 13.500H1z" fill="#eafcfc" stroke="#555" stroke-width=".8"/><path d="M1 4l3-2.500h9L10 4z" fill="#5ce5e6"/><path d="M10 13.500V4l3-2.500v9z" fill="#139a9b"/></symbol>
    <symbol id="s-saved" viewBox="0 0 14 14"><path d="M.6 6l2-2h4M11 8.500v3l-2 2H.6V6" fill="#f7ffff" stroke="#444" stroke-width="1"/><path d="M9 13.500l2.500-2.500V7" stroke="#1aa3a5" stroke-width="1.400" fill="none"/><path d="M5.500 7.500L7.500 1l1.500 6.500M6 5.500h2.500M10.500 7.200V1.200h1.500c2 0 2 2.800 0 2.800h-1.500M12 4c2.200 0 2.200 3.200 0 3.200h-1.500" fill="none" stroke="#222" stroke-width=".9"/></symbol>
    <symbol id="s-view" viewBox="0 0 14 14"><rect x="1" y=".8" width="11" height="12" fill="#fff" stroke="#333" stroke-width=".9"/><path d="M1 3.500h11" stroke="#555" stroke-width=".8"/><rect x="4" y="6.500" width="9.800" height="7" rx=".8" fill="#777" stroke="#111" stroke-width=".8"/><circle cx="9" cy="10" r="2.200" fill="#fff" stroke="#111"/></symbol>
    <symbol id="s-datum" viewBox="0 0 14 14"><path d="M.5 1l4 4M4.500 1l-4 4M8 .5L6.500 3M6 6l7 7.500M13 6l-6 7.500M4.500 8L2 13.500" stroke="#7b3510" stroke-width="1.300"/></symbol>
    <symbol id="s-annot" viewBox="0 0 14 14"><rect x=".5" y=".6" width="8" height="4" fill="#f4f080" stroke="#333" stroke-width=".9"/><path d="M8.500 2.500H12L8 8" fill="none" stroke="#222" stroke-width="1"/><path d="M6 8h6l-2 2.500 3 3H6l2-3z" fill="#777" stroke="#333" stroke-width=".8"/></symbol>
    <symbol id="s-spin" viewBox="0 0 14 14"><path d="M2.500 3L6 7h6M6 7l-3.500 5" fill="none" stroke="#222" stroke-width="1.200"/><circle cx="2.300" cy="2.300" r="2" fill="#25c52c" stroke="#084"/><circle cx="12" cy="6.800" r="2" fill="#e01818" stroke="#600"/><circle cx="2.300" cy="12" r="2" fill="#28c9d8" stroke="#045"/></symbol>
    <symbol id="s-box" viewBox="0 0 14 14"><path d="M1 4l3.500-3H13v8.500L9.500 13H1zM1 4h8.500v9M9.500 4L13 1" fill="#fff" stroke="#111" stroke-width="1.200"/><rect x="2.500" y="7" width="2.500" height="4.500" fill="#35d8e6"/><rect x="5" y="7" width="2" height="4.500" fill="#f3ee3a"/></symbol>
  </svg>

  <div class="window">

    <!-- Title bar -->
    <header class="titlebar">
      <div class="quick">
        <svg class="ic"><use href="#i-creo"/></svg><i class="vline"></i>
        <svg class="ic"><use href="#i-new"/></svg>
        <svg class="ic"><use href="#i-open"/></svg>
        <svg class="ic"><use href="#i-save"/></svg>
        <svg class="ic dark"><use href="#i-undo"/></svg><i class="dd"></i>
        <svg class="ic redo"><use href="#i-undo"/></svg><i class="dd off"></i>
        <svg class="ic"><use href="#i-regen"/></svg>
        <svg class="ic"><use href="#i-windows"/></svg><i class="dd"></i>
        <svg class="ic"><use href="#i-closefolder"/></svg><i class="vline"></i>
        <svg class="ic-xs"><use href="#i-customize"/></svg>
      </div>
      <h1><span data-w="369.500">TENSEGRITY_TRIANGLE_B_1 (Aktiv) - Creo Parametric 2.0</span></h1>
      <div class="winctl">
        <svg class="ic-s"><use href="#i-min"/></svg>
        <svg class="ic-s"><use href="#i-max"/></svg>
        <svg class="ic-s"><use href="#i-close"/></svg>
      </div>
    </header>

    <!-- Tabs -->
    <nav class="tabs">
      <div class="tab file"><span data-w="32.500">Datei</span><i class="dd"></i></div>
      <div class="tabgap"></div>
      <div class="tab active"><span data-w="42">Modell</span></div>
      <div class="tab t1"><span data-w="47.500">Analyse</span></div>
      <div class="tab t2"><span data-w="146">Anmerkungen erstellen</span></div>
      <div class="tab t3"><span data-w="55">Rendern</span></div>
      <div class="tab t4"><span data-w="48">Manikin</span></div>
      <div class="tab t5"><span data-w="71">Werkzeuge</span></div>
      <div class="tab t6"><span data-w="46.500">Ansicht</span></div>
      <div class="tab t7"><span data-w="89.500">Anwendungen</span></div>
      <div class="helpers">
        <svg class="ic-s"><use href="#i-collapse"/></svg>
        <svg class="ic"><use href="#i-search"/></svg>
        <svg class="ic"><use href="#i-learn"/></svg>
        <i class="dd"></i>
        <svg class="ic"><use href="#i-help"/></svg>
      </div>
    </nav>

    <!-- Ribbon -->
    <section class="ribbon">
      <div class="group g-ops">
        <div class="tools">
          <div class="tool"><svg class="big"><use href="#b-regen"/></svg><span data-w="67.500">Regenerieren</span><i class="dd"></i></div>
          <div class="stack">
            <div class="row"><svg class="ic"><use href="#i-copy"/></svg></div>
            <div class="row"><svg class="ic"><use href="#i-paste"/></svg><i class="dd off"></i></div>
            <div class="row"><svg class="ic"><use href="#i-delete"/></svg><i class="dd"></i></div>
          </div>
        </div>
        <div class="caption"><span data-w="61.500">Operationen</span><i class="dd"></i></div>
      </div>

      <div class="group g-data">
        <div class="tools">
          <div class="stack mid">
            <div class="row"><svg class="ic"><use href="#i-udf"/></svg></div>
            <div class="row"><svg class="ic"><use href="#i-copygeom"/></svg></div>
            <div class="row"><svg class="ic"><use href="#i-shrink"/></svg></div>
          </div>
        </div>
        <div class="caption"><span data-w="70">Daten abrufen</span><i class="dd"></i></div>
      </div>

      <div class="group g-comp">
        <div class="tools">
          <div class="tool"><svg class="big"><use href="#b-assemble"/></svg><span data-w="47.500">Einbauen</span><i class="dd"></i></div>
          <div class="stack mid">
            <div class="row"><svg class="ic"><use href="#i-create"/></svg></div>
            <div class="row"><svg class="ic"><use href="#i-repeat"/></svg></div>
          </div>
          <i class="divider"></i>
          <div class="tool up"><svg class="big"><use href="#b-drag"/></svg><span data-w="71">Komponenten</span><span data-w="33.500">ziehen</span></div>
        </div>
        <div class="caption"><span data-w="65">Komponente</span><i class="dd"></i></div>
      </div>

      <div class="group g-datum">
        <div class="tools">
          <div class="tool up"><svg class="big"><use href="#b-plane"/></svg><span data-w="32.500">Ebene</span></div>
          <div class="stack">
            <div class="row"><svg class="ic"><use href="#i-axis"/></svg><span data-w="32.500">Achse</span></div>
            <div class="row"><svg class="ic"><use href="#i-point"/></svg><span data-w="30">Punkt</span><i class="dd"></i></div>
            <div class="row"><svg class="ic"><use href="#i-csys"/></svg><span data-w="99.500">Koordinatensystem</span></div>
          </div>
          <div class="tool up"><svg class="big"><use href="#b-sketch"/></svg><span data-w="35">Skizze</span></div>
        </div>
        <div class="caption"><span data-w="33">Bezug</span><i class="dd"></i></div>
      </div>

      <div class="group g-shape">
        <div class="tools">
          <div class="stack">
            <div class="row"><svg class="ic"><use href="#i-hole"/></svg><span data-w="43">Bohrung</span></div>
            <div class="row"><svg class="ic"><use href="#i-extrude"/></svg><span data-w="26">Profil</span></div>
            <div class="row"><svg class="ic"><use href="#i-revolve"/></svg><span data-w="36.500">Drehen</span></div>
          </div>
        </div>
        <div class="caption"><span data-w="96.500">Schnitt und Fläche</span><i class="dd"></i></div>
      </div>

      <div class="group g-mod">
        <div class="tools">
          <div class="tool"><svg class="big"><use href="#b-pattern"/></svg><div class="line"><span data-w="36">Muster</span><i class="dd"></i></div></div>
        </div>
        <div class="caption"><span data-w="68">Modifikatoren</span><i class="dd"></i></div>
      </div>

      <div class="group g-view">
        <div class="tools">
          <div class="tool"><svg class="big"><use href="#b-views"/></svg><span data-w="51.500">Ansichten</span><div class="line"><span data-w="47.500">verwalten</span><i class="dd"></i></div></div>
          <div class="tool"><svg class="big"><use href="#b-section"/></svg><span data-w="36">Schnitt</span><i class="dd"></i></div>
          <div class="tool"><svg class="big"><use href="#b-sphere"/></svg><span data-w="60">Farbeffekte-</span><div class="line"><span data-w="36.500">Galerie</span><i class="dd"></i></div></div>
          <div class="stack mid">
            <div class="row"><svg class="ic"><use href="#i-explode"/></svg></div>
            <div class="row"><svg class="ic"><use href="#i-toggle"/></svg></div>
            <div class="row"><svg class="ic"><use href="#i-drag3d"/></svg></div>
          </div>
          <div class="tool low"><svg class="big"><use href="#b-shade"/></svg><span data-w="79">Darstellungsstil</span><i class="dd"></i></div>
        </div>
        <div class="caption"><span data-w="90">Modelldarstellung</span><i class="dd"></i></div>
      </div>

      <div class="group g-intent">
        <div class="tools">
          <div class="tool up"><svg class="big"><use href="#b-puzzle"/></svg><span data-w="133">Komponentenschnittstelle</span></div>
          <div class="tool up"><svg class="big"><use href="#b-publish"/></svg><span data-w="75.500">PublizierGeom</span></div>
          <div class="tool up"><svg class="big"><use href="#b-table"/></svg><span data-w="77">Familientabelle</span></div>
          <div class="stack mid">
            <div class="row"><svg class="ic"><use href="#i-brackets"/></svg></div>
            <div class="row"><svg class="ic"><use href="#i-switch"/></svg></div>
            <div class="row"><svg class="ic"><use href="#i-dim"/></svg></div>
          </div>
        </div>
        <div class="caption"><span data-w="71">Modellabsicht</span><i class="dd"></i></div>
      </div>

      <div class="group g-inv">
        <div class="tools">
          <div class="tool up"><svg class="big"><use href="#b-bom"/></svg><span data-w="51">Stückliste</span></div>
          <div class="tool up"><svg class="big"><use href="#b-ref"/></svg><span data-w="48.500">Referenz-</span><span data-w="35">Viewer</span></div>
        </div>
        <div class="caption"><span data-w="64.500">Untersuchen</span><i class="dd"></i></div>
      </div>
      <div class="group g-rest"><div class="tools"></div><div class="caption"></div></div>
    </section>

    <!-- Model tree + graphics window -->
    <main class="work">
      <aside class="side">
        <div class="sidetabs">
          <div class="stab on"><svg class="ic dark"><use href="#i-tree"/></svg></div>
          <div class="stab"><svg class="ic-m"><use href="#i-folders"/></svg></div>
          <div class="stab"><svg class="ic-m"><use href="#i-favfolder"/></svg></div>
        </div>
        <div class="panel">
          <div class="panelhead">
            <b><span data-w="70">Modellbaum</span></b>
            <svg class="ic-l"><use href="#i-tools"/></svg><i class="dd"></i>
            <svg class="ic-l"><use href="#i-list"/></svg><i class="dd"></i>
          </div>
          <div class="find">
            <div class="findbox"><span>×</span></div>
            <i class="dd"></i>
            <svg class="ic"><use href="#i-find"/></svg>
            <svg class="ic"><use href="#i-funnel"/></svg>
            <svg class="ic-s"><use href="#i-plus"/></svg>
          </div>
          <ul class="tree">
            <li class="root"><svg class="ti"><use href="#t-asm"/></svg><span data-w="191">TENSEGRITY_TRIANGLE_B_1.ASM</span></li>
            <li><i class="ex"></i><svg class="ti"><use href="#i-udf"/></svg><span data-w="85.500">Gruppe ORIGIN</span></li>
            <li><i class="ex"></i><svg class="ti"><use href="#t-asm"/></svg><span data-w="119">TRIANGLE_1_B1.ASM</span></li>
            <li><i class="ex"></i><svg class="ti"><use href="#t-pat"/></svg><span data-w="208.500">Muster 2 von PLAETTCHEN_1_B1.PRT</span></li>
            <li><i class="ex"></i><svg class="ti"><use href="#t-pat"/></svg><span data-w="194.500">Muster 1 von KUGEL-KETTE_1.ASM</span></li>
            <li><i class="ex"></i><svg class="ti"><use href="#t-pat"/></svg><span data-w="208.500">Muster 3 von PLAETTCHEN_1_B1.PRT</span></li>
            <li><i class="ex"></i><svg class="ti"><use href="#t-asm"/></svg><span data-w="119">TRIANGLE_2_B1.ASM</span></li>
            <li class="dim"><i class="ex none"></i><svg class="ti"><use href="#t-sketch"/></svg><span data-w="44">Skizze 1</span></li>
            <li><i class="ex"></i><svg class="ti"><use href="#t-prt"/></svg><span data-w="97.500">HAKEN_1_B1.PRT</span></li>
            <li><i class="ex"></i><svg class="ti"><use href="#t-prt"/></svg><span data-w="97.500">HAKEN_1_B1.PRT</span></li>
            <li><i class="ex"></i><svg class="ti"><use href="#t-prt"/></svg><span data-w="148">MEINE_ZUGFEDER_A2.PRT</span></li>
            <li><i class="ex none"></i><svg class="ti"><use href="#t-insert"/></svg><span data-w="75.500">Hier einfügen</span></li>
            <li><i class="ex open"></i><svg class="ti wide"><use href="#t-sec"/></svg><span data-w="45">Schnitte</span></li>
            <li class="leaf"><svg class="ti wide"><use href="#t-seca"/></svg><span class="sel">A</span></li>
          </ul>
        </div>
      </aside>

      <svg class="view" viewBox="783 436 3621 2160" preserveAspectRatio="none">
        <defs>
          <linearGradient id="rod" x1="0" y1="0" x2="0" y2="1"><stop offset="0" stop-color="#e0a97c"/><stop offset=".2" stop-color="#f2c092"/><stop offset=".5" stop-color="#eab688"/><stop offset=".85" stop-color="#a98260"/><stop offset="1" stop-color="#6a4e3b"/></linearGradient>
          <linearGradient id="bore" x1="0" y1="0" x2="1" y2="0"><stop offset="0" stop-color="#8d6d52"/><stop offset=".5" stop-color="#eeb688"/><stop offset="1" stop-color="#a07c5d"/></linearGradient>
          <radialGradient id="bead" cx=".45" cy=".38" r=".62"><stop offset="0" stop-color="#d0d0d0"/><stop offset=".25" stop-color="#8f9091"/><stop offset=".8" stop-color="#5d5f62"/><stop offset="1" stop-color="#2c3034"/></radialGradient>
          <linearGradient id="coil" x1="0" y1="0" x2="1" y2="0"><stop offset="0" stop-color="#4f4d52"/><stop offset=".5" stop-color="#8a888c"/><stop offset="1" stop-color="#4f4d52"/></linearGradient>
          <g id="strut">
            <path d="M1650 624L1658 624 2495 2078 2479 2064Z M1839 624L1848 624 2628 1983 2631 2001Z" fill="#75604f" stroke="#2a211c" stroke-width="1.500"/>
            <path d="M1658 624H1839L2631 2001A84.500 84.500 0 0 1 2495 2077Z" fill="#dfae80" stroke="#15100d" stroke-width="3"/>
          </g>
          <path id="hookline" d="M2578 1032A31 31 0 1 0 2530 1055Q2547 1062 2547 1082V1225Q2547 1238 2533 1246A28.500 28.500 0 1 0 2563 1247"/>
          <g id="hook" fill="none">
            <use href="#hookline" stroke="#ffe92c" stroke-width="18"/>
            <circle cx="2547" cy="1029" r="19" fill="#ffe92c"/>
            <use href="#hookline" stroke="#b1580e" stroke-width="11"/>
            <circle cx="2547" cy="1029" r="15.500" fill="#b1580e"/>
          </g>
          <g id="ends">
            <path d="M1833 552H3200V586H1833ZM1833 588H3200V622H1833Z" fill="#6a4e3b"/>
            <rect x="1833" y="552" width="1370" height="35" fill="url(#rod)"/>
            <rect x="1833" y="588" width="1370" height="35" fill="url(#rod)"/>
            <g fill="#b1560d" stroke="#fdee2c" stroke-width="4">
              <path d="M1668 551H1823Q1831 560 1831 569T1823 587H1668Q1660 578 1660 569T1668 551Z"/>
              <path d="M1668 587H1823Q1831 596 1831 605T1823 623H1668Q1660 614 1660 605T1668 587Z"/>
              <path d="M3203 551H3337V587H3200Q3187 578 3187 569T3203 551Z"/>
              <path d="M3200 587H3337V623H3203Q3187 614 3187 605T3200 587Z"/>
              <path d="M3380 551H3444V587H3380ZM3380 587H3444V623H3380Z"/>
            </g>
            <rect x="3339" y="553" width="39" height="70" fill="url(#bore)"/>
          </g>
        </defs>
        <rect x="783" y="436" width="3621" height="2160" fill="#152c43"/>

        <g id="ballchain"></g>
        <path d="M1710 2400H1758V2415H1710Z" fill="#e9e6ea"/><path d="M1758 2400H1770V2415H1758Z" fill="#3b3338"/><path d="M1770 2400H1782V2415H1770Z" fill="#a5a3a3"/>
        <use href="#strut"/>
        <use href="#strut" transform="rotate(180 2547 1519.500)"/>
        <use href="#ends"/>
        <use href="#ends" y="1866"/>
        <use href="#hook"/>
        <g id="spring"></g>
        <use href="#hook" transform="rotate(180 2547 1520)"/>

        <path d="M3327 625H3354V640H3327ZM3327 2400H3354V2414H3327Z" fill="#e6e6ea"/>
        <path d="M3323 2414V2399H3352" fill="none" stroke="#1d1f26" stroke-width="4"/>
        <path d="M3362 625H3394V641H3362ZM3362 2399H3394V2414H3362Z" fill="#b1560d" stroke="#fdee2c" stroke-width="3"/>
        <g id="cutchain"></g>

        <text class="state" x="801" y="2251" textLength="270">Clippen-Zustand:A</text>
        <g class="mark">
          <text class="han" x="1330 1517 1704" y="1416">莫西网</text>
          <text transform="translate(1882 1410) scale(.71 1)">www</text>
          <text x="2170" y="1410">.</text>
          <text x="2260" y="1410">3</text>
          <text x="2352" y="1410">d</text>
          <text transform="translate(2444 1410) scale(.64 1)">m</text>
          <text x="2537 2632" y="1410">ox</text>
          <text x="2728" y="1410">.</text>
          <text x="2820 2911" y="1410">co</text>
          <text transform="translate(3004 1410) scale(.64 1)">m</text>
        </g>
      </svg>
    </main>

    <!-- Status bar -->
    <footer class="status">
      <div class="navbtn on"><svg class="ic navy"><use href="#i-tree"/></svg></div>
      <div class="navbtn"><svg class="ic"><use href="#s-globe"/></svg></div>
      <i class="vline"></i>
      <div class="viewbar">
        <svg class="ic"><use href="#s-refit"/></svg>
        <svg class="ic"><use href="#s-zin"/></svg>
        <svg class="ic"><use href="#s-zout"/></svg>
        <svg class="ic"><use href="#s-paint"/></svg>
        <svg class="ic"><use href="#s-cube"/></svg><i class="dd"></i>
        <svg class="ic"><use href="#s-saved"/></svg><i class="dd"></i>
        <svg class="ic"><use href="#s-view"/></svg>
        <svg class="ic"><use href="#s-datum"/></svg><i class="dd"></i>
        <svg class="ic"><use href="#s-annot"/></svg>
        <svg class="ic"><use href="#s-spin"/></svg>
      </div>
      <div class="lights"><i class="on"></i><i></i><i></i></div>
      <div class="sbtn"><svg class="ic"><use href="#i-find"/></svg></div>
      <div class="sbtn"><svg class="ic"><use href="#s-box"/></svg></div>
      <div class="count"><span data-w="66">1 ausgewählt</span></div>
      <div class="filter"><span data-w="31">Smart</span><div class="filterarrow"><i class="dd"></i></div></div>
    </footer>
  </div>

  <script src="app.js"></script>
</body>
</html>
```

FILE: styles.css
```css
/* 1rem = 10 layout units, the window is 1568 units wide */
html {
  font-size: calc(100vw / 156.8);
}

* {
  margin: 0;
  padding: 0;
  box-sizing: border-box;
}

body {
  width: 100vw;
  height: 100vh;
  overflow: hidden;
  background: #929292;
  font-family: "Liberation Sans", Arial, sans-serif;
  font-size: 1.13rem;
  color: #2b2d30;
}

.sprite {
  position: absolute;
  width: 0;
  height: 0;
}

svg {
  display: block;
  flex: none;
}

.window {
  display: flex;
  flex-direction: column;
  width: 100vw;
  height: 100vh;
  padding: 0.25rem 0.22rem 0.18rem 0.25rem;
  border-top: 0.1rem solid #4b4b4b;
  border-left: 0.1rem solid #4b4b4b;
}

span {
  white-space: nowrap;
}

/* icons */
.ic { width: 1.4rem; height: 1.4rem; overflow: visible; }
.ic-m { width: 1.6rem; height: 1.6rem; }
.ic-l { width: 1.7rem; height: 1.7rem; }
.ic-s { width: 1rem; height: 1rem; }
.ic-xs { width: 0.8rem; height: 0.8rem; }
.big { width: 3rem; height: 3rem; }
.dark { color: #333; }
.navy { color: #15245c; }
.redo { color: #9b9b9b; transform: scaleX(-1); }

.dd {
  display: block;
  flex: none;
  width: 0;
  height: 0;
  border-left: 0.27rem solid transparent;
  border-right: 0.27rem solid transparent;
  border-top: 0.36rem solid #3a3a3a;
}

.dd.off {
  border-top-color: #a5a5a5;
}

.vline {
  width: 0.1rem;
  height: 2.1rem;
  background: #c6c6c6;
}

/* title bar */
.titlebar {
  display: flex;
  height: 3.02rem;
  background: #fcfdfd;
}

.quick {
  display: grid;
  grid-template-columns: 1.6rem 0.56rem 2.08rem 2.08rem 2.16rem 2.2rem 1.1rem 2.24rem 1.16rem 2.14rem 2.12rem 1.32rem 1.98rem 0.52rem 1.78rem;
  align-items: center;
  justify-items: center;
  width: 69.1rem;
  padding-left: 1rem;
  padding-bottom: 0.06rem;
  justify-content: start;
}

.titlebar h1 {
  width: 80.4rem;
  font-size: 1.24rem;
  line-height: 2.9rem;
  color: #1c1c1e;
}

.winctl {
  display: flex;
  gap: 1.4rem;
  padding-top: 0.93rem;
}

/* tabs */
.tabs {
  display: flex;
  align-items: flex-end;
  height: 2.5rem;
  padding-left: 0.4rem;
  background: #fcfdfd;
}

.tab {
  display: flex;
  align-items: center;
  justify-content: center;
  height: 2.12rem;
  padding-bottom: 0.15rem;
  border-top: 0.1rem solid #b9babb;
  border-bottom: 0.1rem solid #b9babb;
  border-right: 0.05rem solid #d8d9da;
  background: #eeeff0;
  color: #5a5d63;
  font-size: 1.28rem;
  font-weight: bold;
}

.tab.file {
  width: 5.45rem;
  gap: 0.25rem;
  border-left: 0.1rem solid #b9babb;
  border-right: 0.1rem solid #b9babb;
}

.tab.file .dd {
  margin-top: 0.3rem;
}

.tabgap {
  width: 0.78rem;
  height: 0.1rem;
  background: #b9babb;
}

.tab.active {
  width: 6.19rem;
  height: 2.48rem;
  padding-bottom: 0;
  background: #fdfdfd;
  color: #2a2b2e;
  border: 0.1rem solid #b9babb;
  border-bottom: none;
}

.t1 { width: 6.9rem; }
.t2 { width: 16.65rem; }
.t3 { width: 7.5rem; }
.t4 { width: 6.92rem; }
.t5 { width: 9.15rem; }
.t6 { width: 6.63rem; }
.t7 { width: 11rem; border-right: 0.1rem solid #b9babb; }

.helpers {
  display: grid;
  grid-template-columns: 1rem 2.6rem 1.6rem 1.8rem 1.6rem;
  align-items: center;
  justify-items: center;
  flex: 1;
  height: 100%;
  padding-left: 69.42rem;
  padding-bottom: 0.5rem;
  justify-content: start;
  border-bottom: 0.1rem solid #b9babb;
}

/* ribbon */
.ribbon {
  display: flex;
  height: 9.6rem;
  padding-left: 0.4rem;
  background: #fdfdfd;
}

.group {
  display: flex;
  flex-direction: column;
  border-right: 0.07rem solid #d0d1d2;
}

.group:first-child {
  border-left: 0.07rem solid #c5c6c7;
}

.tools {
  display: grid;
  height: 7.3rem;
}

.caption {
  display: flex;
  align-items: center;
  justify-content: center;
  gap: 0.6rem;
  flex: 1;
  padding-bottom: 0.08rem;
  background: #eff0f0;
  border-top: 0.1rem solid #c3c4c5;
}

.caption .dd {
  margin-bottom: 0.2rem;
}

.tool {
  display: flex;
  flex-direction: column;
  align-items: center;
  padding-top: 0.47rem;
  line-height: 1.36rem;
}

.tool .big {
  margin-bottom: 0.64rem;
}

.tool.up .big {
  margin-bottom: 0.5rem;
}

.tool.low .big {
  margin-bottom: 1.45rem;
}

.tool > .dd {
  margin-top: 0.45rem;
}

.tool.low > .dd {
  margin-top: 0.05rem;
}

.line {
  display: flex;
  align-items: center;
  gap: 0.45rem;
}

.stack {
  display: flex;
  flex-direction: column;
  padding-top: 0.1rem;
}

.row {
  display: flex;
  align-items: center;
  height: 2.34rem;
}

.stack.mid .row {
  justify-content: center;
}

.g-ops { width: 11.45rem; }
.g-ops .tools { grid-template-columns: 8.1rem 1fr; }
.g-ops .row { gap: 0.8rem; }
.g-data { width: 9.12rem; }
.g-comp { width: 17.01rem; }
.g-comp .tools { grid-template-columns: 6.14rem 1.6rem 0.65rem 1fr; }
.g-comp .tool.up { padding-left: 0.15rem; }
.g-datum { width: 21.32rem; }
.g-datum .tools { grid-template-columns: 4.55rem 12rem 4.6rem; }
.g-datum .row { gap: 0.38rem; padding-left: 0.12rem; }
.g-datum .row .dd { margin-left: 0.35rem; }
.g-shape { width: 11.66rem; }
.g-shape .tools { padding-left: 2.74rem; }
.g-shape .row { gap: 0.35rem; }
.g-shape .caption, .g-mod .caption, .g-data .caption { gap: 0.4rem; }
.g-mod { width: 8.88rem; }
.g-view { width: 29.6rem; }
.g-view .tools { grid-template-columns: 7.25rem 4.15rem 7.55rem 1.4rem 1fr; }
.g-intent { width: 33.39rem; }
.g-intent .tools { grid-template-columns: 14.6rem 7.76rem 8.86rem 1.65rem; }
.g-inv { width: 12.09rem; }
.g-inv .tools { grid-template-columns: 6.5rem 5.04rem; }
.g-rest { flex: none; width: 0.87rem; }

.divider {
  margin: 1.4rem 0 1rem;
  border-right: 0.07rem solid #d6d7d8;
}

/* work area */
.work {
  display: flex;
  height: 76.55rem;
  background: #fdfdfd;
}

.view {
  width: 128.37rem;
  height: 76.55rem;
}

.side {
  display: flex;
  flex-direction: column;
  width: 27.41rem;
  padding: 1.2rem 0.4rem 1.08rem 0.4rem;
}

.sidetabs {
  display: flex;
  height: 2.6rem;
}

.stab {
  display: flex;
  align-items: center;
  justify-content: center;
  width: 2.64rem;
  background: #f0f0f1;
  border: 0.08rem solid #c9cacb;
  border-left: none;
}

.stab.on {
  width: 2.65rem;
  background: #fdfdfd;
  border-left: 0.08rem solid #c9cacb;
  border-bottom-color: #fdfdfd;
}

.panel {
  flex: 1;
  border-left: 0.08rem solid #c4c5c6;
  border-top: 0.08rem solid #c4c5c6;
  border-right: 0.25rem solid #cfcfd1;
  border-bottom: 0.18rem solid #aeafb1;
}

.panelhead {
  display: grid;
  grid-template-columns: 17.3rem 2.2rem 1.4rem 2.4rem 1.3rem;
  align-items: center;
  justify-items: center;
  height: 2.45rem;
  padding-left: 1.8rem;
}

.panelhead b {
  justify-self: start;
  font-size: 1.2rem;
}

.find {
  display: grid;
  grid-template-columns: 17.85rem 1.7rem 2.3rem 2.3rem 2.3rem;
  align-items: center;
  justify-items: center;
  height: 3.1rem;
  padding-bottom: 0.4rem;
  border-bottom: 0.1rem solid #c9cacb;
}

.findbox {
  width: 100%;
  height: 2.65rem;
  padding: 0.25rem 0.95rem 0 0;
  text-align: right;
  border: 0.08rem solid #c4c5c6;
  border-left: none;
  background: #fff;
  font-size: 1.4rem;
  line-height: 1.4rem;
  color: #666;
}

.tree {
  list-style: none;
  font-size: 1.13rem;
  font-weight: bold;
  color: #35383c;
}

.tree li {
  display: flex;
  align-items: center;
  height: 1.597rem;
  padding-left: 0.85rem;
}

.tree .root {
  padding-left: 0.45rem;
}

.tree .leaf {
  padding-left: 3.95rem;
}

.ti {
  width: 1.3rem;
  height: 1.3rem;
  margin-right: 0.38rem;
}

.ti.wide {
  width: 1.4rem;
  height: 1.4rem;
  margin-right: 0.35rem;
}

.leaf .ti.wide {
  margin-right: 0.12rem;
}

.ex {
  width: 0.7rem;
  height: 0.7rem;
  margin-right: 0.6rem;
  background: #8f8f8f;
  clip-path: polygon(0 0, 100% 50%, 0 100%);
}

.ex.open {
  clip-path: polygon(0 8%, 100% 8%, 50% 100%);
}

.ex.none {
  background: none;
}

.tree .dim {
  font-weight: normal;
  color: #bdbdbd;
}

.sel {
  padding: 0 0.08rem;
  line-height: 1.45rem;
  background: #b5dcf6;
}

/* texts in the graphics window, sizes in model units */
.state {
  font-size: 31px;
  fill: #cdd4d9;
}

.mark {
  font-family: "Liberation Serif", "Noto Sans CJK SC", serif;
  font-size: 182px;
  fill: rgba(255, 255, 255, 0.7);
  stroke: rgba(20, 30, 40, 0.35);
  stroke-width: 1px;
}

.mark .han {
  font-family: "Noto Sans CJK SC", sans-serif;
  font-size: 180px;
  font-weight: 300;
}

/* status bar */
.status {
  display: flex;
  align-items: center;
  flex: 1;
  margin-top: 0.16rem;
  padding-left: 0.55rem;
  background: #eff0f0;
}

.navbtn {
  display: flex;
  align-items: center;
  justify-content: center;
  width: 1.9rem;
  height: 1.95rem;
  margin-right: 0.4rem;
  margin-top: 0.35rem;
  border: 0.07rem solid #c4c5c6;
  background: #f7f7f7;
}

.navbtn.on {
  background: #dfe0e1;
  border-top: 0.2rem solid #aaabac;
}

.status > .vline {
  margin: 0.4rem 0 0 0.4rem;
  height: 2rem;
  background: #d3d4d5;
}

.viewbar {
  display: grid;
  grid-template-columns: 2.15rem 2.15rem 2.1rem 2.15rem 2.15rem 1.2rem 2.15rem 1.2rem 2.15rem 2.15rem 1.2rem 2.15rem 2.1rem;
  align-items: center;
  justify-items: center;
  justify-content: start;
  width: 28.3rem;
  height: 2.6rem;
  margin-left: 85.65rem;
  padding-left: 0.35rem;
  padding-bottom: 0.4rem;
  border-left: 0.07rem solid #d0d1d2;
  border-right: 0.07rem solid #d0d1d2;
}

.lights {
  display: flex;
  align-items: center;
  gap: 0.1rem;
  width: 3.1rem;
  padding-left: 0.3rem;
}

.lights i {
  width: 0.5rem;
  height: 0.5rem;
  border-radius: 50%;
  background: #cdcdcd;
}

.lights .on {
  width: 0.95rem;
  height: 0.95rem;
  background: #43d843;
}

.sbtn {
  display: flex;
  align-items: center;
  justify-content: center;
  width: 3.5rem;
  height: 2.5rem;
  margin-right: 0.55rem;
  border: 0.1rem solid #bcbdbe;
  border-radius: 0.2rem;
  background: linear-gradient(#fafafa, #eaebeb);
}

.sbtn + .sbtn {
  margin-right: 0.35rem;
}

.count {
  width: 8.2rem;
}

.filter {
  display: flex;
  align-items: center;
  justify-content: space-between;
  width: 15.8rem;
  height: 2rem;
  margin-bottom: 0.1rem;
  padding-left: 0.5rem;
  border: 0.08rem solid #bcbdbe;
  background: linear-gradient(#fff, #f1f1f2);
}

.filterarrow {
  display: flex;
  align-items: center;
  justify-content: center;
  width: 1.2rem;
  height: 100%;
  border-left: 0.07rem solid #c9cacb;
}
```

FILE: app.js
```js
const NS = "http://www.w3.org/2000/svg";

function add(parent, tag, attrs) {
  const el = document.createElementNS(NS, tag);
  for (const k in attrs) el.setAttribute(k, attrs[k]);
  parent.appendChild(el);
}

const firstBead = 602.3;
const pitch = 61.2;

// ball chain on the left, from the strut down to the lower triangle
function drawBallChain() {
  const g = document.getElementById("ballchain");
  for (let i = 3; i <= 29; i++) {
    const y = firstBead + pitch * i;
    if (i < 29) add(g, "rect", { x: 1742, y: y + 22, width: 7, height: 17, fill: "#9da2a5" });
    add(g, "circle", { cx: 1747, cy: y, r: 20, fill: "url(#bead)" });
  }
}

// the same chain on the right, cut by section A
function drawCutChain() {
  const g = document.getElementById("cutchain");
  const x = 3358.5;
  for (let i = 0; i <= 30; i++) {
    const y = firstBead + pitch * i;
    add(g, "circle", { cx: x, cy: y, r: 19.5, fill: "url(#bead)", stroke: "#fffa12", "stroke-width": 6.5 });
    add(g, "rect", { x: x - 2, y: y - 11, width: 4, height: 22, fill: "#0c0d12" });
  }
  for (let i = 0; i < 30; i++) {
    const y = firstBead + pitch * i;
    add(g, "path", { d: `M${x} ${y + 13}V${y + pitch - 13}`, stroke: "#fff01c", "stroke-width": 14 });
    add(g, "path", { d: `M${x} ${y + 15}V${y + pitch - 15}`, stroke: "#b5570f", "stroke-width": 7 });
    add(g, "path", { d: `M${x - 5} ${y + 16.5}h10M${x - 5} ${y + pitch - 16.5}h10`, stroke: "#b5570f", "stroke-width": 4 });
  }
  add(g, "rect", { x: x - 5, y: firstBead - 23, width: 10, height: 14, fill: "#15151a" });
  add(g, "rect", { x: x - 4, y: firstBead + pitch * 30 + 8, width: 7, height: 14, fill: "#15151a" });
}

function drawSpring() {
  const g = document.getElementById("spring");
  add(g, "rect", { x: 2525, y: 1337, width: 44, height: 366, fill: "url(#coil)" });
  for (let y = 1340; y < 1702; y += 7.3) {
    add(g, "path", { d: `M2520 ${y}L2574 ${y + 1}`, stroke: "#2f2e33", "stroke-width": 2 });
    add(g, "path", { d: `M2526 ${y + 3.5}L2568 ${y + 3.5}`, stroke: "#a3a1a5", "stroke-width": 1.6 });
  }
  // cut wire ends, merged into longer blobs where two coils touch
  const left = [1340, 1350, 1364, 1378, 1397, 1415, 1433, 1451, 1470, [1496, 9], 1511, [1543, 8], [1567, 9], 1588, 1607, 1625, 1643, [1671, 14], 1691, 1703];
  const right = [[1361, 9], 1388, 1408, 1425, 1442, 1460, [1475, 11], 1493, [1514, 12], [1540, 14], 1561, 1580, 1598, 1615, 1634, 1652, [1678, 8]];
  const blob = (x) => (p) => {
    const [y, ry] = Array.isArray(p) ? p : [p, 5];
    add(g, "ellipse", { cx: x, cy: y, rx: 4, ry, fill: "#f6ee12" });
  };
  left.forEach(blob(2521.5));
  right.forEach(blob(2571.5));
  add(g, "path", { d: "M2546.5 1305V1333M2546.5 1722V1736", stroke: "#a9a9ab", "stroke-width": 3.5 });
  add(g, "path", { d: "M2541 1338h11M2541 1703h11M2542 1287h9M2542 1753h9", stroke: "#f6ee12", "stroke-width": 5 });
}

// spread the letters of a label over the width given in layout units
function fitLabels() {
  const unit = parseFloat(getComputedStyle(document.documentElement).fontSize) / 10;
  document.querySelectorAll("[data-w]").forEach((el) => {
    el.style.display = "inline-block";
    const gap = (el.dataset.w * unit - el.getBoundingClientRect().width) / (el.textContent.length - 1);
    el.style.letterSpacing = gap + "px";
    el.style.marginRight = -gap + "px";
  });
}

drawBallChain();
drawCutChain();
drawSpring();
fitLabels();
```
